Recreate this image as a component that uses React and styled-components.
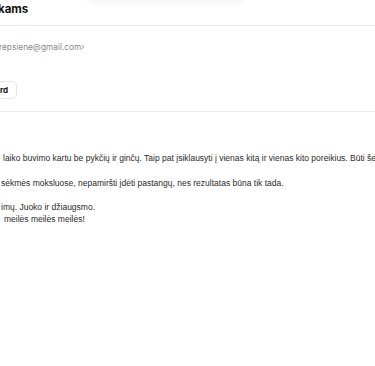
import styled, { createGlobalStyle } from "styled-components";

const GlobalStyle = createGlobalStyle`
  html, body {
    margin: 0;
    padding: 0;
    background: #ffffff;
  }
  body {
    font-family: Inter, "Noto Sans", sans-serif;
    overflow: hidden;
  }
`;

const Page = styled.div`
  width: 375px;
  height: 366px;
  overflow: hidden;
  position: relative;
  background: #fff;
`;

const TopShadow = styled.div`
  position: absolute;
  top: -8px;
  left: 88px;
  width: 156px;
  height: 8px;
  border-radius: 6px;
  box-shadow: 0 2px 6px rgba(0, 0, 0, 0.06);
`;

const Header = styled.div`
  height: 25px;
  border-bottom: 1px solid #ececec;
  display: flex;
  align-items: center;
`;

const Title = styled.h1`
  margin: -7px 0 0 -2px;
  font-size: 11.5px;
  font-weight: 700;
  color: #111;
  line-height: 16px;
`;

const Meta = styled.div`
  border-bottom: 1px solid #ececec;
  padding: 15px 0 12px;
  display: flex;
  flex-direction: column;
  gap: 27px;
`;

const Sender = styled.div`
  margin-left: -1px;
  font-size: 8.3px;
  color: #8a8a8a;
  line-height: 13px;
  white-space: nowrap;
`;

const Actions = styled.div`
  display: flex;
  margin-left: -12px;
`;

const Button = styled.button`
  height: 18px;
  padding: 0 8px 0 11px;
  border: 1px solid #e6e6e6;
  border-radius: 5px;
  background: #fff;
  font-family: Inter, sans-serif;
  font-size: 8px;
  font-weight: 700;
  color: #111;
`;

const Body = styled.div`
  padding-top: 40px;
  display: flex;
  flex-direction: column;
  font-family: "Liberation Sans", Arial, sans-serif;
  font-size: 8.5px;
  color: #2a2a2a;
`;

const Line = styled.p`
  margin: 0;
  line-height: 12px;
  white-space: nowrap;
  padding-left: ${(p) => p.$indent || 0}px;
  margin-bottom: ${(p) => p.$gap || 0}px;
`;

export default function App() {
  return (
    <>
      <GlobalStyle />
      <Page>
        <TopShadow />
        <Header>
          <Title>kams</Title>
        </Header>
        <Meta>
          <Sender>repsiene@gmail.com›</Sender>
          <Actions>
            <Button>rd</Button>
          </Actions>
        </Meta>
        <Body>
          <Line $indent={3} $gap={13}>
            laiko buvimo kartu be pykčių ir ginčų. Taip pat įsiklausyti į vienas kitą ir vienas kito poreikius. Būti šei
          </Line>
          <Line $indent={1} $gap={12}>
            sėkmės moksluose, nepamiršti įdėti pastangų, nes rezultatas būna tik tada.
          </Line>
          <Line $indent={1}>imų. Juoko ir džiaugsmo.</Line>
          <Line $indent={4}>meilės meilės meilės!</Line>
        </Body>
      </Page>
    </>
  );
}
